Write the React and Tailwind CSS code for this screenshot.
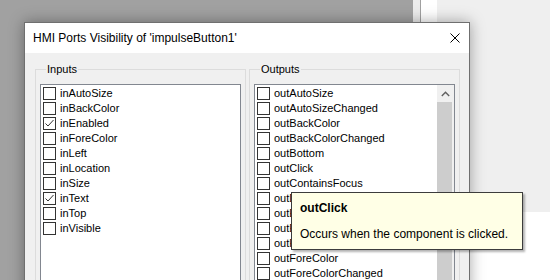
const inputs = [
  { name: 'inAutoSize', checked: false },
  { name: 'inBackColor', checked: false },
  { name: 'inEnabled', checked: true },
  { name: 'inForeColor', checked: false },
  { name: 'inLeft', checked: false },
  { name: 'inLocation', checked: false },
  { name: 'inSize', checked: false },
  { name: 'inText', checked: true },
  { name: 'inTop', checked: false },
  { name: 'inVisible', checked: false },
];

const outputs = [
  'outAutoSize',
  'outAutoSizeChanged',
  'outBackColor',
  'outBackColorChanged',
  'outBottom',
  'outClick',
  'outContainsFocus',
  'outDoubleClick',
  'outEnabled',
  'outEnabledChanged',
  'outFont',
  'outForeColor',
  'outForeColorChanged',
];

function CheckBox({ checked }) {
  return (
    <span className="flex h-[13px] w-[13px] shrink-0 items-center justify-center border border-[#333333] bg-white">
      {checked && (
        <svg width="11" height="11" viewBox="0 0 11 11" fill="none">
          <path d="M1.5 5.5 L4 8 L9.5 2" stroke="#333333" strokeWidth="1" />
        </svg>
      )}
    </span>
  );
}

function Row({ name, checked }) {
  return (
    <div className="flex h-[15px] items-center pl-[2px]">
      <CheckBox checked={checked} />
      <span className="ml-[4px] whitespace-nowrap text-[11px] leading-[15px] text-black">{name}</span>
    </div>
  );
}

function GroupBox({ title, children }) {
  return (
    <fieldset className="h-[260px] w-[211px] border border-[#dcdcdc] px-[4px] pt-[8px]">
      <legend className="ml-[6px] px-[1px] text-[11px] leading-[13px] text-black">{title}</legend>
      {children}
    </fieldset>
  );
}

export default function App() {
  return (
    <div
      className="relative h-[280px] w-[550px] overflow-hidden"
      style={{ fontFamily: '"Liberation Sans", Arial, sans-serif' }}
    >
      {/* windows behind the dialog */}
      <div className="flex h-full">
        <div className="w-[413px] bg-[#a1a1a1]" />
        <div className="w-[7px] bg-[#ececec]" />
        <div className="w-[1px] bg-[#a0a0a0]" />
        <div className="w-[16px] bg-white" />
        <div className="flex flex-1 flex-col">
          <div className="h-[212px] bg-[#efefef]" />
          <div className="flex-1 bg-white" />
        </div>
      </div>

      {/* dialog */}
      <div className="absolute left-[24px] top-[22px] flex w-[446px] flex-col border border-[#6f6f6f] bg-[#f0f0f0] shadow-[0_0_14px_rgba(0,0,0,0.35)]">
        <div className="flex h-[30px] shrink-0 items-center justify-between bg-white pl-[8px]">
          <span className="text-[12px] text-black">HMI Ports Visibility of 'impulseButton1'</span>
          <svg className="mr-[9px]" width="10" height="10" viewBox="0 0 10 10">
            <path d="M0.5 0.5 L9.5 9.5 M9.5 0.5 L0.5 9.5" stroke="#000" strokeWidth="1" />
          </svg>
        </div>
        <div className="flex shrink-0 gap-[3px] pl-[10px] pt-[10px]">
          <GroupBox title="Inputs">
            <div className="h-[240px] border border-[#828790] bg-white pt-[1px]">
              {inputs.map((item) => (
                <Row key={item.name} name={item.name} checked={item.checked} />
              ))}
            </div>
          </GroupBox>
          <GroupBox title="Outputs">
            <div className="flex h-[240px] border border-[#828790] bg-white">
              <div className="flex-1 overflow-hidden pt-[1px]">
                {outputs.map((name) => (
                  <Row key={name} name={name} checked={false} />
                ))}
              </div>
              <div className="flex w-[17px] flex-col bg-[#f0f0f0]">
                <div className="flex h-[17px] items-center justify-center">
                  <svg width="9" height="6" viewBox="0 0 9 6" fill="none">
                    <path d="M0.8 5 L4.5 1.3 L8.2 5" stroke="#606060" strokeWidth="1.4" />
                  </svg>
                </div>
                <div className="w-[15px] flex-1 bg-[#cdcdcd]" />
              </div>
            </div>
          </GroupBox>
        </div>
      </div>

      {/* tooltip */}
      <div className="absolute left-[291px] top-[192px] h-[58px] w-[232px] border border-[#3c3c3c] bg-[#ffffe6] pl-[8px] pt-[8px] shadow-[2px_2px_2px_rgba(0,0,0,0.3)]">
        <div className="text-[12px] font-bold leading-[15px] text-black">outClick</div>
        <div className="mt-[11px] text-[12px] leading-[15px] text-black">Occurs when the component is clicked.</div>
      </div>
    </div>
  );
}
